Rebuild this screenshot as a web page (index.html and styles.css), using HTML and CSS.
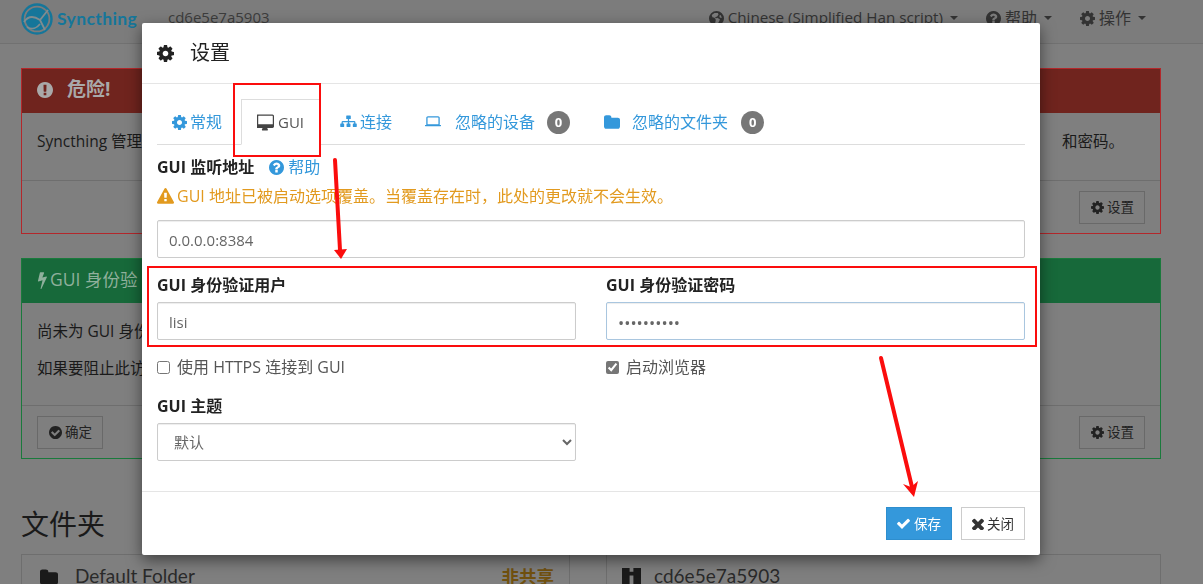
FILE: index.html
```html
<!DOCTYPE html>
<html lang="zh">
<head>
<meta charset="utf-8">
<title>Syncthing</title>
<link rel="stylesheet" href="styles.css">
</head>
<body>
<svg class="defs" width="0" height="0">
  <symbol id="i-cog" viewBox="128 128 1536 1536"><path d="M1152 896q0-106-75-181t-181-75-181 75-75 181 75 181 181 75 181-75 75-181zm512-109v222q0 12-8 23t-20 13l-185 28q-19 54-39 91 35 50 107 138 10 12 10 25t-9 23q-27 37-99 108t-94 71q-12 0-26-9l-138-108q-44 23-91 38-16 136-29 186-7 28-36 28h-222q-14 0-24.5-8.5t-11.5-21.5l-28-184q-49-16-90-37l-141 107q-10 9-25 9-14 0-25-11-126-114-165-168-7-10-7-23 0-12 8-23 15-21 51-66.5t54-70.5q-27-50-41-99l-183-27q-13-2-21-12.5t-8-23.5v-222q0-12 8-23t19-13l186-28q14-46 39-92-40-57-107-138-10-12-10-24 0-10 9-23 26-36 98.5-107.5t94.5-71.5q13 0 26 10l138 107q44-23 91-38 16-136 29-186 7-28 36-28h222q14 0 24.5 8.5t11.5 21.5l28 184q49 16 90 37l142-107q9-9 24-9 13 0 25 10 129 119 165 170 7 8 7 22 0 12-8 23-15 21-51 66.5t-54 70.5q26 50 41 98l183 28q13 2 21 12.5t8 23.5z"/></symbol>
  <symbol id="i-desktop" viewBox="0 0 1792 1792"><path fill-rule="evenodd" d="M160 64h1472q66 0 113 47t47 113v1088q0 66-47 113t-113 47h-544q0 37 16 77.5t32 71 16 43.5q0 26-19 45t-45 19h-512q-26 0-45-19t-19-45q0-14 16-44t32-70 16-78h-544q-66 0-113-47t-47-113v-1088q0-66 47-113t113-47zM160 192q-32 0-32 32v832q0 32 32 32h1472q32 0 32-32v-832q0-32-32-32z"/></symbol>
  <symbol id="i-sitemap" viewBox="32 32 1728 1728"><path d="M704 192h384q40 0 40 40v272q0 40-40 40h-128v192h512q53 0 90 37t38 91v136h96q40 0 40 40v272q0 40-40 40h-320q-40 0-40-40v-272q0-40 40-40h96v-128h-512v128h96q40 0 40 40v272q0 40-40 40h-320q-40 0-40-40v-272q0-40 40-40h96v-128h-512v128h96q40 0 40 40v272q0 40-40 40h-320q-40 0-40-40v-272q0-40 40-40h96v-136q0-54 38-91t90-37h512v-192h-128q-40 0-40-40v-272q0-40 40-40z"/></symbol>
  <symbol id="i-laptop" viewBox="96 96 1600 1600"><path fill-rule="evenodd" d="M384 320h1024q66 0 113 47t47 113v704h128v96q0 40-40 40h-1520q-40 0-40-40v-96h128v-704q0-66 47-113t113-47zM384 448q-32 0-32 32v640h1088v-640q0-32-32-32z"/></symbol>
  <symbol id="i-folder" viewBox="0 -16 1664 1664"><path d="M1664 592v704q0 92-66 158t-158 66h-1216q-92 0-158-66t-66-158v-960q0-92 66-158t158-66h320q92 0 158 66t66 158v32h672q92 0 158 66t66 158z"/></symbol>
  <symbol id="i-question" viewBox="128 128 1536 1536"><path d="M1024 1376v-192q0-14-9-23t-23-9h-192q-14 0-23 9t-9 23v192q0 14 9 23t23 9h192q14 0 23-9t9-23zm256-672q0-88-55.5-163t-138.5-116-170-41q-243 0-371 213-15 24 8 42l132 100q7 6 19 6 16 0 25-12 53-68 86-92 34-24 86-24 48 0 85.5 26t37.5 59q0 38-20 61t-68 45q-63 28-115.5 86.5t-52.5 125.5v36q0 14 9 23t23 9h192q14 0 23-9t9-23q0-19 21.5-49.5t54.5-49.5q32-18 49-28.5t46-35 44.5-48 28-60.5 12.5-81zm384 192q0 209-103 385.5t-279.5 279.5-385.5 103-385.5-103-279.5-279.5-103-385.5 103-385.5 279.5-279.5 385.5-103 385.5 103 279.5 279.5 103 385.5z"/></symbol>
  <symbol id="i-exclaim" viewBox="128 128 1536 1536"><path d="M896 128q209 0 385.5 103t279.5 279.5 103 385.5-103 385.5-279.5 279.5-385.5 103-385.5-103-279.5-279.5-103-385.5 103-385.5 279.5-279.5 385.5-103zm128 1247v-190q0-14-9-23.5t-22-9.5h-192q-13 0-23 10t-10 23v190q0 13 10 23t23 10h192q13 0 22-9.5t9-23.5zm-2-344l18-621q0-12-10-18-10-8-24-8h-220q-14 0-24 8-10 6-10 18l17 621q0 10 10 17.5t24 7.5h185q14 0 23.5-7.5t10.5-17.5z"/></symbol>
  <symbol id="i-warn" viewBox="0 0 1792 1792"><path d="M1024 1375v-190q0-14-9.5-23.5t-22.5-9.5h-192q-13 0-22.5 9.5t-9.5 23.5v190q0 14 9.5 23.5t22.5 9.5h192q13 0 22.5-9.5t9.5-23.5zm-2-374l18-459q0-12-10-19-13-11-24-11h-220q-11 0-24 11-10 7-10 21l17 457q0 10 10 16.5t24 6.5h185q14 0 23.5-6.5t10.5-16.5zm-14-934l768 1408q35 63-2 126-17 29-46.5 46t-63.5 17h-1536q-34 0-63.5-17t-46.5-46q-37-63-2-126l768-1408q17-31 47-49t65-18 65 18 47 49z"/></symbol>
  <symbol id="i-bolt" viewBox="370 0 970 1792"><path d="M1333 566q18 20 7 44l-540 1157q-13 25-42 25-4 0-14-2-17-5-25.5-19t-4.5-30l197-808-406 101q-4 1-12 1-18 0-31-11-18-15-13-39l201-825q4-14 16-23t28-9h328q19 0 32 12.5t13 29.5q0 8-5 18l-171 463 396-98q8-2 12-2 19 0 34 15z"/></symbol>
  <symbol id="i-checkc" viewBox="128 128 1536 1536"><path d="M1412 734q0-28-18-46l-91-90q-19-19-45-19t-45 19l-408 407-226-226q-19-19-45-19t-45 19l-91 90q-18 18-18 46 0 27 18 45l362 362q19 19 45 19 27 0 46-19l543-543q18-18 18-45zm252 162q0 209-103 385.5t-279.5 279.5-385.5 103-385.5-103-279.5-279.5-103-385.5 103-385.5 279.5-279.5 385.5-103 385.5 103 279.5 279.5 103 385.5z"/></symbol>
  <symbol id="i-check" viewBox="121 121 1550 1550"><path d="M1671 566q0 40-28 68l-724 724-136 136q-28 28-68 28t-68-28l-136-136-362-362q-28-28-28-68t28-68l136-136q28-28 68-28t68 28l294 295 656-657q28-28 68-28t68 28l136 136q28 28 28 68z"/></symbol>
  <symbol id="i-times" viewBox="302 302 1190 1190"><path d="M1490 1322q0 40-28 68l-136 136q-28 28-68 28t-68-28l-294-294-294 294q-28 28-68 28t-68-28l-136-136q-28-28-28-68t28-68l294-294-294-294q-28-28-28-68t28-68l136-136q28-28 68-28t68 28l294 294 294-294q28-28 68-28t68 28l136 136q28 28 28 68t-28 68l-294 294 294 294q28 28 28 68z"/></symbol>
  <symbol id="i-globe" viewBox="1 1 22 22"><path fill-rule="evenodd" d="M12 1a11 11 0 1 1 0 22 11 11 0 0 1 0-22zM9 4 5 7l1 3 3 1 2 3-1 5 3 2 3-5 1-3-4-2-2 1-1-2 3-1 2-3-1-2zm9 3-2 1 1 3h3z"/></symbol>
</svg>

<div class="page">
  <nav class="navbar">
    <div class="brand">
      <svg class="logo" viewBox="0 0 32 32">
        <circle cx="16" cy="16" r="14.5" fill="none" stroke="#15769a" stroke-width="2.4"/>
        <circle cx="16" cy="16" r="11.5" fill="#15769a"/>
        <path d="M3 19C7 13 13 13 19 17L27 7M19 17 24 27M6 24C11 27 16 25 19 21" fill="none" stroke="#7f8c90" stroke-width="1.8"/>
      </svg>
      <span class="brand-name">Syncthing</span>
    </div>
    <span class="device-name">cd6e5e7a5903</span>
    <ul class="nav-menu">
      <li class="nav-lang"><svg class="ic"><use href="#i-globe"/></svg>Chinese (Simplified Han script)<span class="caret"></span></li>
      <li><svg class="ic"><use href="#i-question"/></svg>帮助<span class="caret"></span></li>
      <li><svg class="ic"><use href="#i-cog"/></svg>操作<span class="caret"></span></li>
    </ul>
  </nav>

  <main class="content">
    <section class="panel panel-danger">
      <h3 class="panel-head"><svg class="ic"><use href="#i-exclaim"/></svg><span class="danger-title">危险!</span></h3>
      <div class="panel-body danger-body">
        <p class="split-line"><span>Syncthing 管理</span><span>和密码。</span></p>
      </div>
      <div class="panel-foot end">
        <span class="btn"><svg class="ic-s"><use href="#i-cog"/></svg>设置</span>
      </div>
    </section>

    <section class="panel panel-success">
      <h3 class="panel-head"><svg class="ic-bolt"><use href="#i-bolt"/></svg>GUI 身份验</h3>
      <div class="panel-body success-body">
        <p>尚未为 GUI 身份</p>
        <p>如果要阻止此访</p>
      </div>
      <div class="panel-foot between">
        <span class="btn"><svg class="ic-s"><use href="#i-checkc"/></svg>确定</span>
        <span class="btn"><svg class="ic-s"><use href="#i-cog"/></svg>设置</span>
      </div>
    </section>

    <div class="columns">
      <div class="column">
        <h2 class="section-title">文件夹</h2>
        <div class="list-panel">
          <svg class="list-ic"><use href="#i-folder"/></svg>
          <span class="list-name">Default Folder</span>
          <span class="unshared">非共享</span>
        </div>
      </div>
      <div class="column">
        <div class="list-panel device-panel">
          <svg class="identicon" viewBox="0 0 5 5"><path d="M0 0h2v1H0zM3 0h2v1H3zM0 1h5v1H0zM0 2h2v3H0zM3 2h2v3H3z"/></svg>
          <span class="list-name">cd6e5e7a5903</span>
        </div>
      </div>
    </div>
  </main>
</div>

<div class="modal">
  <header class="modal-head">
    <svg class="modal-ic"><use href="#i-cog"/></svg>
    <h4 class="modal-title">设置</h4>
  </header>
  <div class="modal-body">
    <ul class="tabs">
      <li class="tab"><svg class="tab-ic narrow"><use href="#i-cog"/></svg>常规</li>
      <li class="tab active"><svg class="tab-ic"><use href="#i-desktop"/></svg>GUI</li>
      <li class="tab"><svg class="tab-ic"><use href="#i-sitemap"/></svg>连接</li>
      <li class="tab wide device-tab"><svg class="tab-ic"><use href="#i-laptop"/></svg>忽略的设备<span class="badge">0</span></li>
      <li class="tab wide folder-tab"><svg class="tab-ic"><use href="#i-folder"/></svg>忽略的文件夹<span class="badge">0</span></li>
    </ul>
    <div class="label-line">
      <label class="label">GUI 监听地址</label>
      <a class="help"><svg class="help-ic"><use href="#i-question"/></svg>帮助</a>
    </div>
    <p class="warning"><svg class="warn-ic"><use href="#i-warn"/></svg>GUI 地址已被启动选项覆盖。当覆盖存在时，此处的更改就不会生效。</p>
    <input class="field" type="text" value="0.0.0.0:8384">
    <div class="form-grid">
      <div class="cell">
        <label class="label">GUI 身份验证用户</label>
        <input class="field" type="text" value="lisi">
      </div>
      <div class="cell">
        <label class="label">GUI 身份验证密码</label>
        <input class="field focus" type="password" value="abcdefghij">
      </div>
      <label class="check"><input type="checkbox">使用 HTTPS 连接到 GUI</label>
      <label class="check"><input type="checkbox" checked>启动浏览器</label>
      <div class="cell theme">
        <label class="label">GUI 主题</label>
        <select class="field select"><option>默认</option></select>
      </div>
    </div>
  </div>
  <footer class="modal-foot">
    <span class="mbtn primary"><svg class="ic-check"><use href="#i-check"/></svg>保存</span>
    <span class="mbtn plain"><svg class="ic-times"><use href="#i-times"/></svg>关闭</span>
  </footer>
</div>

<svg class="annot" viewBox="0 0 1203 584">
  <rect x="234" y="84" width="86" height="72"/>
  <rect x="148" y="267" width="888" height="79"/>
  <path class="shaft" d="M335 160 340 250"/>
  <path class="head" d="M334 250 347 249 341 259z"/>
  <path class="shaft" d="M881 358 912 487"/>
  <path class="head" d="M903 484 911 487 918 481 914 497z"/>
</svg>
</body>
</html>
```
FILE: styles.css
```css
* { box-sizing: border-box; }
html, body { margin: 0; height: 584px; overflow: hidden; }
body {
  background: #7f7f7f;
  color: #1a1a1a;
  font: 15.5px/1.43 "Open Sans", "Noto Sans CJK SC", sans-serif;
}
.defs { position: absolute; }
svg { fill: currentColor; }
h2, h3, h4, p, ul { margin: 0; padding: 0; }
ul { list-style: none; }

.page { height: 584px; overflow: hidden; }
.navbar {
  height: 44px;
  display: flex;
  align-items: center;
  padding: 0 57px 7px 21px;
  background: #7c7c7c;
  border-bottom: 1px solid #717171;
  color: #333;
  font-size: 16px;
}
.brand { display: flex; align-items: center; gap: 4px; width: 147px; }
.logo { width: 32px; height: 32px; margin-top: 1px; }
.brand-name { font: 700 17.5px "Lato", sans-serif; letter-spacing: .4px; color: #15769a; }
.device-name { color: #3d3d3d; font-size: 15px; }
.nav-menu { margin-left: auto; display: flex; gap: 28px; }
.nav-menu li { display: flex; align-items: center; }
.nav-lang { font-size: 15.2px; }
.ic { width: 15px; height: 15px; margin-right: 4px; flex: none; }
.caret {
  margin-left: 7px;
  border-top: 4px solid #333;
  border-left: 4px solid transparent;
  border-right: 4px solid transparent;
}

.content { padding: 24px 42px 0 21px; }
.panel { width: 1140px; border: 1px solid; margin-bottom: 24px; }
.panel-danger { height: 166px; border-color: #b3272b; }
.panel-success { height: 201px; border-color: #1a7a3c; }
.panel-head {
  height: 44px;
  display: flex;
  align-items: center;
  padding: 0 15px 3px;
  font-size: 17.5px;
  font-weight: 500;
}
.panel-danger .panel-head { background: #70241e; color: #a9a9a9; }
.panel-success .panel-head { background: #17693a; color: #8fb09c; font-weight: 400; }
.panel-danger .ic { width: 16px; height: 16px; }
.danger-title { margin-left: 10px; font-weight: 700; font-size: 19px; color: #a9a9a9; }
.ic-bolt { width: 10px; height: 18px; margin-right: 3px; flex: none; }
.panel-body { padding: 17px 15px 0; white-space: nowrap; overflow: hidden; }
.panel-body p { margin-bottom: 15px; }
.danger-body { height: 67px; }
.success-body { height: 102px; }
.split-line { display: flex; justify-content: space-between; padding-right: 21px; }
.panel-foot {
  display: flex;
  padding: 10px 15px;
  border-top: 1px solid #6e6e6e;
}
.end { justify-content: flex-end; }
.between { justify-content: space-between; }
.btn {
  height: 33px;
  display: flex;
  align-items: center;
  padding: 0 10px 0 11px;
  border: 1px solid #696969;
  font-size: 13.5px;
  color: #222;
}
.ic-s { width: 13px; height: 13px; margin-right: 3px; flex: none; }

.columns { display: grid; grid-template-columns: 549px 555px; gap: 36px; align-items: end; margin-top: 45px; }
.section-title { font-size: 28px; font-weight: 400; line-height: 40px; margin-bottom: 10px; color: #1a1a1a; }
.list-panel {
  height: 60px;
  display: flex;
  align-items: flex-start;
  padding: 10px 15px;
  border: 1px solid #6e6e6e;
  font: 19px/1.2 "Lato", "Noto Sans CJK SC", sans-serif;
}
.list-ic { margin: 3px 17px 0 3px; width: 18px; height: 18px; flex: none; }
.unshared { margin-left: auto; color: #71510f; font-weight: 700; font-family: "Noto Sans CJK SC", sans-serif; font-size: 17.5px; }
.identicon { width: 19px; height: 19px; margin-right: 13px; margin-top: 3px; }
.list-name { color: #2a2a2a; }

.modal {
  position: fixed;
  left: 142px;
  top: 23px;
  width: 898px;
  height: 532px;
  display: flex;
  flex-direction: column;
  background: #fff;
  border-radius: 2px;
  box-shadow: 0 5px 15px rgba(0, 0, 0, .5);
  font-size: 16px;
  line-height: 22px;
  color: #222;
}
.modal-head {
  height: 61px;
  flex: none;
  display: flex;
  align-items: center;
  gap: 16px;
  padding: 0 15px;
  border-bottom: 1px solid #e5e5e5;
}
.modal-ic { width: 17px; height: 17px; }
.modal-title { font-size: 20px; font-weight: 400; }
.modal-body { flex: 1; padding: 15px 15px 0; }
.tabs { display: flex; gap: 3px; height: 46px; border-bottom: 1px solid #ddd; }
.tab {
  height: 46px;
  display: flex;
  align-items: center;
  padding: 0 15px;
  color: #3498db;
  white-space: nowrap;
}
.tab-ic { width: 17px; height: 17px; margin-right: 3px; flex: none; }
.tab-ic.narrow { width: 15px; height: 15px; margin-right: 3px; }
.tab.wide .tab-ic { width: 16px; height: 16px; margin-right: 14px; }
.tab.active .tab-ic { margin-right: 4px; color: #444; }
.folder-tab { padding-left: 16px; }
.tab.wide.folder-tab .tab-ic { margin-right: 12px; }
.tab.active {
  color: #555;
  font-size: 15px;
  background: #fff;
  border: 1px solid #ddd;
  border-bottom-color: #fff;
  margin-left: 1px;
  margin-right: 2px;
}
.badge {
  margin-left: 12px;
  width: 23px;
  height: 23px;
  border-radius: 12px;
  background: #777;
  color: #fff;
  font-size: 13px;
  font-weight: 700;
  line-height: 23px;
  text-align: center;
}
.folder-tab .badge { margin-left: 13px; }
.label { font-weight: 700; display: block; font-size: 16px; }
.label-line { display: flex; align-items: center; gap: 15px; margin-top: 11px; height: 22px; }
.help { display: flex; align-items: center; color: #3498db; font-size: 16px; }
.help-ic { width: 15px; height: 15px; margin-right: 4px; }
.warning {
  display: flex;
  align-items: center;
  margin-top: 7px;
  height: 22px;
  color: #e29a1f;
  font-size: 16px;
}
.warn-ic { width: 17px; height: 17px; margin-right: 3px; flex: none; }
.field {
  display: block;
  width: 100%;
  height: 38px;
  margin-top: 13px;
  padding: 2px 11px 0;
  border: 1px solid #ccc;
  border-radius: 2px;
  background: #fff;
  color: #666;
  font: 15px "Open Sans", "Noto Sans CJK SC", sans-serif;
  box-shadow: inset 0 1px 1px rgba(0, 0, 0, .075);
}
.focus { border-color: #a9c6df; font-size: 16.5px; }
.select { padding: 0 11px 0 12px; }
.form-grid {
  display: grid;
  grid-template-columns: 419px 419px;
  column-gap: 30px;
  margin-top: 16px;
}
.cell .label { line-height: 22px; }
.cell .field { margin-top: 6px; }
.check {
  display: flex;
  align-items: center;
  margin-top: 16px;
  height: 22px;
  color: #555;
  font-size: 16px;
}
.check input { width: 13px; height: 13px; margin: 0 7px 0 0; accent-color: #767676; }
.theme { margin-top: 17px; }
.modal-foot {
  height: 64px;
  flex: none;
  display: flex;
  justify-content: flex-end;
  gap: 9px;
  padding: 15px;
  border-top: 1px solid #e5e5e5;
}
.mbtn {
  height: 33px;
  display: flex;
  align-items: center;
  padding: 0 10px;
  font-size: 13.5px;
}
.ic-check { width: 13px; height: 13px; margin-right: 4px; flex: none; }
.ic-times { width: 12px; height: 12px; margin-right: 3px; flex: none; }
.primary { background: #3498db; color: #fff; border: 1px solid #2e8ece; }
.plain { background: #fff; color: #333; border: 1px solid #ccc; }

.annot { position: fixed; left: 0; top: 0; width: 1203px; height: 584px; pointer-events: none; fill: none; }
.annot rect { fill: none; stroke: #fb0d0d; stroke-width: 2; }
.shaft { stroke: #fb0d0d; stroke-width: 4; stroke-linecap: round; fill: none; }
.head { fill: #fb0d0d; }
```
